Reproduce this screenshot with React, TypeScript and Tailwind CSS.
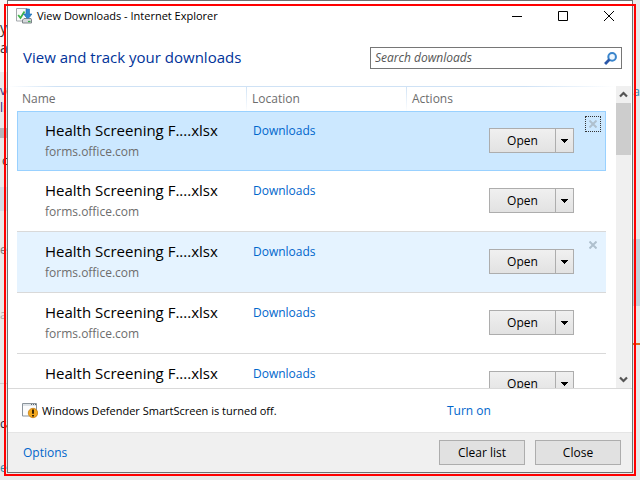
import React from "react";

type Download = { name: string; source: string; location: string; state: "selected" | "hovered" | "idle" };

const base = { name: "Health Screening F....xlsx", source: "forms.office.com", location: "Downloads" };
const downloads: Download[] = [
  { ...base, state: "selected" },
  { ...base, state: "idle" },
  { ...base, state: "hovered" },
  { ...base, state: "idle" },
  { ...base, state: "idle" },
];

const cellStyle = {
  selected: "border-y border-[#99d1ff] bg-[#cce8ff]",
  hovered: "border-b border-[#d9d9d9] bg-[#e5f3ff]",
  idle: "border-b border-[#d9d9d9]",
};

function DownloadsIcon() {
  return (
    <svg width="16" height="16" viewBox="0 0 16 16" aria-hidden="true">
      <path d="M.5.5h10.500v12.500H.5z" fill="#fafafa" stroke="#a3a8ac" />
      <path d="M2.200 7l2.300 3L8.500 3.500" fill="none" stroke="#3fb54a" strokeWidth="1.800" />
      <path d="M10 1h3.500v5H16l-4.200 5L7.500 6H10z" fill="#2f86cf" stroke="#1d68ad" strokeWidth=".6" />
      <path d="M6.500 12l1.500-1.500h7l.5 1.500v3h-9z" fill="#d4d7da" stroke="#7e858a" />
      <path d="M11.800 11L9 8h5.600z" fill="#2f86cf" />
      <path d="M12 13.500h2.500" stroke="#35b04a" strokeWidth="1.200" />
    </svg>
  );
}

function WarningIcon() {
  return (
    <svg width="16" height="16" viewBox="0 0 16 16" aria-hidden="true">
      <path d="M.5.500h14v12.500H.5z" fill="#fcfcfc" stroke="#8b949b" />
      <path d="M1 1h13v2H1z" fill="#dfe4e8" />
      <path d="M9 1.500h1M11 1.500h1M13 1.500h1" stroke="#59656f" />
      <circle cx="11" cy="10" r="4.700" fill="#f3a81d" stroke="#c77b0c" strokeWidth=".8" />
      <path d="M11 6.500v4.200M11 12v1.500" stroke="#241600" strokeWidth="1.800" />
    </svg>
  );
}

function TitleBar() {
  return (
    <header className="flex h-[30px] shrink-0 items-center pl-2">
      <DownloadsIcon />
      <h1 className="ml-[5px] flex-1 text-[11px] leading-4">View Downloads - Internet Explorer</h1>
      <button type="button" aria-label="Minimize" className="flex h-full w-[46px] items-center justify-center">
        <svg width="10" height="10"><path d="M0 5.500h10" stroke="#000" /></svg>
      </button>
      <button type="button" aria-label="Maximize" className="flex h-full w-[46px] items-center justify-center">
        <svg width="10" height="10"><path d="M.5.500h9v9h-9z" fill="none" stroke="#000" /></svg>
      </button>
      <button type="button" aria-label="Close window" className="flex h-full w-[46px] items-center justify-center">
        <svg width="10" height="10"><path d="M0 0l10 10M10 0L0 10" stroke="#000" /></svg>
      </button>
    </header>
  );
}

function Row({ item }: { item: Download }) {
  const cell = cellStyle[item.state];
  const selected = item.state === "selected";
  return (
    <tr className="h-[61px] first:h-[60px]">
      <td className={`align-top ${cell} ${selected ? "border-l pl-[27px] pt-[7px]" : "pl-7 pt-2"}`}>
        <div className="text-[15px] leading-[22px]">{item.name}</div>
        <div className="text-[12px] leading-[22px] text-[#6d6d6d]">{item.source}</div>
      </td>
      <td className={`pl-[7px] align-top ${cell} ${selected ? "pt-[7px]" : "pt-2"}`}>
        <a href="#downloads" className="block w-fit text-[12px] leading-6 text-[#0066cc]">{item.location}</a>
      </td>
      <td className={`p-0 align-top ${cell} ${selected ? "border-r" : ""}`}>
        <div className={`flex items-start justify-end gap-[11px] ${selected ? "-mt-px pr-1" : "pr-[5px]"}`}>
          <div className="mt-[17px] flex h-[25px] w-[85px] border border-[#adadad] bg-linear-to-b from-[#f0f0f0] to-[#e2e2e2]">
            <button type="button" className="flex-1 text-[12px]">Open</button>
            <button type="button" aria-label="More options" className="flex w-[18px] items-center justify-center border-l border-[#adadad]">
              <svg width="7" height="4" shapeRendering="crispEdges"><path d="M0 0h7v1H0zM1 1h5v1H1zM2 2h3v1H2zM3 3h1v1H3z" fill="#000" /></svg>
            </button>
          </div>
          <div className="mt-[5px] size-4">
            {item.state !== "idle" && (
              <button type="button" aria-label="Remove" className={`flex size-4 items-center justify-center ${selected ? "border border-dotted border-[#333]" : ""}`}>
                <svg width="8" height="8"><path d="M.5.500l7 7M7.500.500l-7 7" stroke="#afc0ce" strokeWidth="2" /></svg>
              </button>
            )}
          </div>
        </div>
      </td>
    </tr>
  );
}

function ScrollBar() {
  return (
    <div className="mr-px flex w-[15px] shrink-0 flex-col bg-[#f0f0f0]">
      <button type="button" aria-label="Scroll up" className="flex h-[17px] shrink-0 items-center justify-center">
        <svg width="9" height="7"><path d="M1 5.500l3.500-3.500L8 5.500" fill="none" stroke="#555" strokeWidth="2.200" /></svg>
      </button>
      <div className="flex-1"><div className="h-[52px] bg-[#cdcdcd]" /></div>
      <button type="button" aria-label="Scroll down" className="flex h-[17px] shrink-0 items-center justify-center">
        <svg width="9" height="7"><path d="M1 1.500L4.500 5 8 1.500" fill="none" stroke="#555" strokeWidth="2.200" /></svg>
      </button>
    </div>
  );
}

const divider = "border-l border-transparent [border-image:linear-gradient(#cfe2f5,#fff)_1]";

function PageBehind() {
  return (
    <div className="absolute inset-0 -z-10 overflow-hidden bg-[#e9e9e9] text-[12px] leading-4 text-[#333]" aria-hidden="true">
      <div className="absolute left-0 top-0 h-[72px] w-2 bg-[#f8f8f8]" />
      <span className="absolute left-0 top-5 text-[14px]">y</span>
      <span className="absolute left-0 top-10 text-[14px]">a</span>
      <span className="absolute left-0 top-[83px] text-[#2b2b80]">ve</span>
      <span className="absolute left-0 top-[100px] text-[#2b2b80]">li</span>
      <div className="absolute left-0 top-32 h-[10px] w-2 bg-[#b5b5b8]" />
      <span className="absolute left-[2px] top-[153px]">c</span>
      <div className="absolute left-0 top-[187px] h-6 w-2 bg-[#d3dce5]" />
      <span className="absolute left-0 top-[242px] text-[#777]">e</span>
      <span className="absolute left-0 top-[307px] text-[#aaa]">a</span>
      <div className="absolute left-0 top-[383px] h-px w-2 bg-[#ccc]" />
      <span className="absolute left-0 top-[416px] text-[#223]">ca</span>
      <span className="absolute left-0 top-[460px] text-[#2c87a8]">e</span>
      <span className="absolute right-0 top-[84px] text-[#2c87a8]">a</span>
      <div className="absolute right-0 top-[239px] h-[67px] w-2 bg-[#c4d0d9]" />
      <div className="absolute right-0 top-[343px] h-[2px] w-2 bg-[#d9691a]" />
    </div>
  );
}

export default function App() {
  return (
    <div className="relative isolate flex h-screen flex-col px-[7px] pb-[7px] text-black [font-family:'Open_Sans','Noto_Sans',sans-serif]">
      <PageBehind />
      <main className="flex min-h-0 flex-1 flex-col border border-[#707070] bg-white">
        <TitleBar />
        <div className="flex h-[55px] shrink-0 items-start justify-between pl-[15px] pr-[10px]">
          <h2 className="pt-[15px] text-[15px] leading-[22px] text-[#003399]">View and track your downloads</h2>
          <div className="mt-4 flex h-[22px] w-[252px] items-center border border-[#767676] px-1">
            <input type="text" aria-label="Search downloads" placeholder="Search downloads" className="min-w-0 flex-1 text-[12px] leading-5 italic outline-none placeholder:text-[#555]" />
            <svg width="13" height="13" viewBox="0 0 12 12" aria-hidden="true">
              <circle cx="7.500" cy="4.500" r="3.500" fill="#eef7ff" stroke="#3a85cc" strokeWidth="1.900" />
              <path d="M5 7L1 11" stroke="#2b57a8" strokeWidth="2.600" />
            </svg>
          </div>
        </div>
        <div className="flex min-h-0 flex-1 border-b border-[#d9d9d9]">
          <div className="min-w-0 flex-1 overflow-hidden">
            <div className="h-px bg-[linear-gradient(to_right,#fff,#cfe2f5_8%,#cfe2f5_85%,#fff)]" />
            <div className="pl-[9px] pr-[10px]">
              <table className="w-full table-fixed border-separate border-spacing-0 text-left">
                <colgroup><col /><col className="w-[160px]" /><col className="w-[200px]" /></colgroup>
                <thead>
                  <tr className="h-6 text-[12px] leading-4 text-[#6d6d6d]">
                    <th className="pl-[5px] font-normal">Name</th>
                    <th className={`pl-[5px] font-normal ${divider}`}>Location</th>
                    <th className={`pl-[5px] font-normal ${divider}`}>Actions</th>
                  </tr>
                </thead>
                <tbody>{downloads.map((item, i) => <Row key={i} item={item} />)}</tbody>
              </table>
            </div>
          </div>
          <ScrollBar />
        </div>
        <div className="flex h-[43px] shrink-0 items-center pl-[14px] text-[11px] leading-4">
          <WarningIcon />
          <p className="ml-1 flex-1">Windows Defender SmartScreen is turned off.</p>
          <a href="#turn-on" className="w-[185px] text-[12px] text-[#0066cc]">Turn on</a>
        </div>
        <footer className="flex h-10 shrink-0 items-center gap-[10px] border-t border-[#e5e5e5] bg-[#f0f0f0] pl-[15px] pr-[11px] text-[12px]">
          <a href="#options" className="flex-1 text-[#0066cc]">Options</a>
          <button type="button" className="h-[25px] w-[86px] border border-[#adadad] bg-[#e1e1e1]">Clear list</button>
          <button type="button" className="h-[25px] w-[86px] border border-[#adadad] bg-[#e1e1e1]">Close</button>
        </footer>
      </main>
      <div className="pointer-events-none absolute inset-1 border-2 border-[#ff0000]" />
    </div>
  );
}
